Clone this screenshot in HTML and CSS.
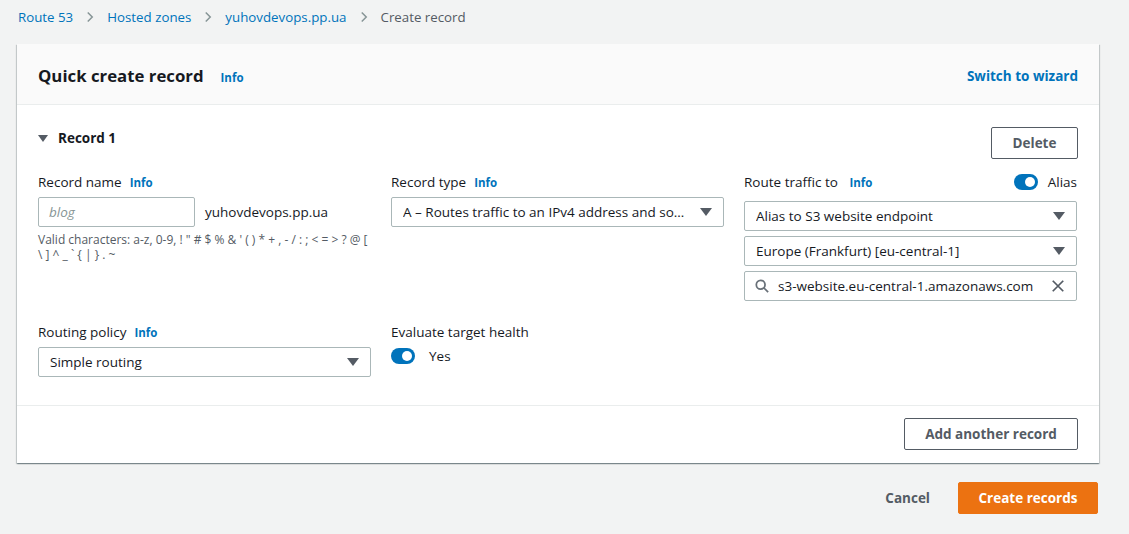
FILE: index.html
```html
<!DOCTYPE html>
<html>
<head>
<meta charset="utf-8">
<link rel="stylesheet" href="styles.css">
</head>
<body>
<nav class="crumbs">
  <a class="link">Route 53</a>
  <svg class="chev" viewBox="0 0 16 16"><path d="M5 2l6 6-6 6" fill="none" stroke="#879596" stroke-width="2"/></svg>
  <a class="link">Hosted zones</a>
  <svg class="chev" viewBox="0 0 16 16"><path d="M5 2l6 6-6 6" fill="none" stroke="#879596" stroke-width="2"/></svg>
  <a class="link">yuhovdevops.pp.ua</a>
  <svg class="chev" viewBox="0 0 16 16"><path d="M5 2l6 6-6 6" fill="none" stroke="#879596" stroke-width="2"/></svg>
  <span class="current">Create record</span>
</nav>

<section class="card">
  <header class="card-head">
    <div class="title-wrap">
      <h1>Quick create record</h1>
      <a class="info">Info</a>
    </div>
    <a class="wizard">Switch to wizard</a>
  </header>

  <div class="card-body">
    <div class="rec-head">
      <div class="rec-title"><span class="tri"></span>Record 1</div>
      <button class="btn">Delete</button>
    </div>

    <div class="grid">
      <div class="field">
        <div class="label">Record name <a class="info">Info</a></div>
        <div class="name-row">
          <div class="input small"><span class="ph">blog</span></div>
          <span class="domain">yuhovdevops.pp.ua</span>
        </div>
        <div class="help">Valid characters: a-z, 0-9, ! " # $ % &amp; ' ( ) * + , - / : ; &lt; = &gt; ? @ [ \ ] ^ _ ` { | } . ~</div>
      </div>

      <div class="field">
        <div class="label">Record type <a class="info">Info</a></div>
        <div class="select"><span class="val">A – Routes traffic to an IPv4 address and so…</span><span class="caret"></span></div>
      </div>

      <div class="field">
        <div class="label spread">
          <span>Route traffic to <a class="info">Info</a></span>
          <span class="alias"><span class="toggle"></span>Alias</span>
        </div>
        <div class="stack">
          <div class="select"><span class="val">Alias to S3 website endpoint</span><span class="caret"></span></div>
          <div class="select"><span class="val">Europe (Frankfurt) [eu-central-1]</span><span class="caret"></span></div>
          <div class="select search">
            <svg class="mag" viewBox="0 0 16 16"><circle cx="6.5" cy="6.5" r="5" fill="none" stroke="#687078" stroke-width="2"/><path d="M10 10l5 5" stroke="#687078" stroke-width="2"/></svg>
            <span class="val">s3-website.eu-central-1.amazonaws.com</span>
            <svg class="x" viewBox="0 0 16 16"><path d="M2 2l12 12M14 2L2 14" stroke="#545b64" stroke-width="2"/></svg>
          </div>
        </div>
      </div>

      <div class="field row2">
        <div class="label">Routing policy <a class="info">Info</a></div>
        <div class="select"><span class="val">Simple routing</span><span class="caret"></span></div>
      </div>

      <div class="field row2">
        <div class="label">Evaluate target health</div>
        <div class="yes"><span class="toggle"></span>Yes</div>
      </div>
    </div>
  </div>

  <footer class="card-foot">
    <button class="btn">Add another record</button>
  </footer>
</section>

<div class="actions">
  <a class="cancel">Cancel</a>
  <button class="primary">Create records</button>
</div>
</body>
</html>
```

FILE: styles.css
```css
* { box-sizing: border-box; }
body {
  margin: 0;
  background: #f2f3f3;
  font-family: "Open Sans", "Noto Sans", sans-serif;
  color: #16191f;
  font-size: 14px;
}
.crumbs {
  display: flex;
  align-items: center;
  height: 34px;
  padding: 0 18px;
  font-size: 13.3px;
}
.link { color: #0073bb; }
.current { color: #545b64; }
.chev { width: 12px; height: 12px; margin: 0 11px; }

.card {
  margin: 10px 30px 0 17px;
  background: #fff;
  box-shadow: 0 1px 1px 0 rgba(0,28,36,.3), 1px 1px 1px 0 rgba(0,28,36,.15), -1px 1px 1px 0 rgba(0,28,36,.15);
}
.card-head {
  display: flex;
  justify-content: space-between;
  align-items: center;
  height: 61px;
  padding: 2px 21px 0 21px;
  background: #fafafa;
  border-bottom: 1px solid #eaeded;
}
.title-wrap { display: flex; align-items: baseline; }
h1 { margin: 0; font-size: 16.8px; font-weight: 700; }
.info { color: #0073bb; font-weight: 700; font-size: 11.5px; margin-left: 17px; }
.label .info { margin-left: 8px; }
.wizard { color: #0073bb; font-weight: 700; font-size: 13.5px; margin-top: 2px; }

.card-body { padding: 22px 21px 28px 21px; border-bottom: 1px solid #eaeded; }
.rec-head { display: flex; justify-content: space-between; align-items: flex-start; }
.rec-title { display: flex; align-items: center; font-weight: 700; font-size: 13.5px; margin-top: 2px; }
.tri {
  width: 0; height: 0;
  border-left: 5px solid transparent;
  border-right: 5px solid transparent;
  border-top: 7px solid #545b64;
  margin-right: 10px;
}
.btn {
  font-family: inherit;
  font-weight: 700;
  font-size: 13.5px;
  color: #545b64;
  background: #fff;
  border: 1px solid #545b64;
  border-radius: 2px;
  height: 32px;
  padding: 0 20px;
}
.rec-head .btn { width: 87px; }

.grid {
  display: grid;
  grid-template-columns: 333px 333px 333px;
  column-gap: 20px;
  margin-top: 13px;
}
.row2 { margin-top: 21px; }
.label { font-size: 13.5px; height: 20px; display: flex; align-items: center; margin-bottom: 5px; }
.spread { justify-content: space-between; }
.alias { display: flex; align-items: center; }
.toggle {
  position: relative;
  display: inline-block;
  width: 24px; height: 16px;
  border-radius: 8px;
  background: #0073bb;
  margin-right: 10px;
}
.toggle::after {
  content: "";
  position: absolute;
  top: 3px; right: 3px;
  width: 10px; height: 10px;
  border-radius: 50%;
  background: #fff;
}
.name-row { display: flex; align-items: center; margin-top: 3px; }
.input {
  height: 30px;
  border: 1px solid #aab7b8;
  border-radius: 2px;
  display: flex; align-items: center;
  padding: 0 10px;
}
.small { width: 157px; }
.ph { color: #879596; font-style: italic; font-size: 13.5px; }
.domain { margin-left: 10px; font-size: 13.5px; }
.help { font-size: 12px; color: #545b64; margin-top: 5px; line-height: 15px; }

.select {
  height: 30px;
  border: 1px solid #aab7b8;
  border-radius: 2px;
  display: flex; align-items: center;
  padding: 0 11px 0 11px;
  font-size: 13.5px;
  margin-top: 3px;
}
.val { flex: 1; white-space: nowrap; overflow: hidden; }
.caret {
  width: 0; height: 0;
  border-left: 6px solid transparent;
  border-right: 6px solid transparent;
  border-top: 8px solid #545b64;
}
.stack { display: flex; flex-direction: column; gap: 5px; margin-top: 9px; }
.stack .select { margin-top: 0; height: 30px; }
.search { padding-left: 10px; }
.mag { width: 14px; height: 14px; margin-right: 9px; }
.x { width: 14px; height: 14px; margin-left: 8px; }
.yes { display: flex; align-items: center; font-size: 13.5px; margin-top: 2px; }
.yes .toggle { margin-right: 14px; }

.card-foot { display: flex; justify-content: flex-end; padding: 12px 21px 13px; }
.card-foot .btn { width: 174px; }

.actions {
  display: flex; justify-content: flex-end; align-items: center;
  margin: 19px 31px 0 0;
}
.cancel { font-weight: 700; color: #545b64; font-size: 13.5px; margin-right: 28px; }
.primary {
  font-family: inherit;
  font-weight: 700;
  font-size: 13.5px;
  color: #fff;
  background: #ec7211;
  border: 1px solid #ec7211;
  border-radius: 2px;
  height: 32px;
  width: 140px;
}
```
